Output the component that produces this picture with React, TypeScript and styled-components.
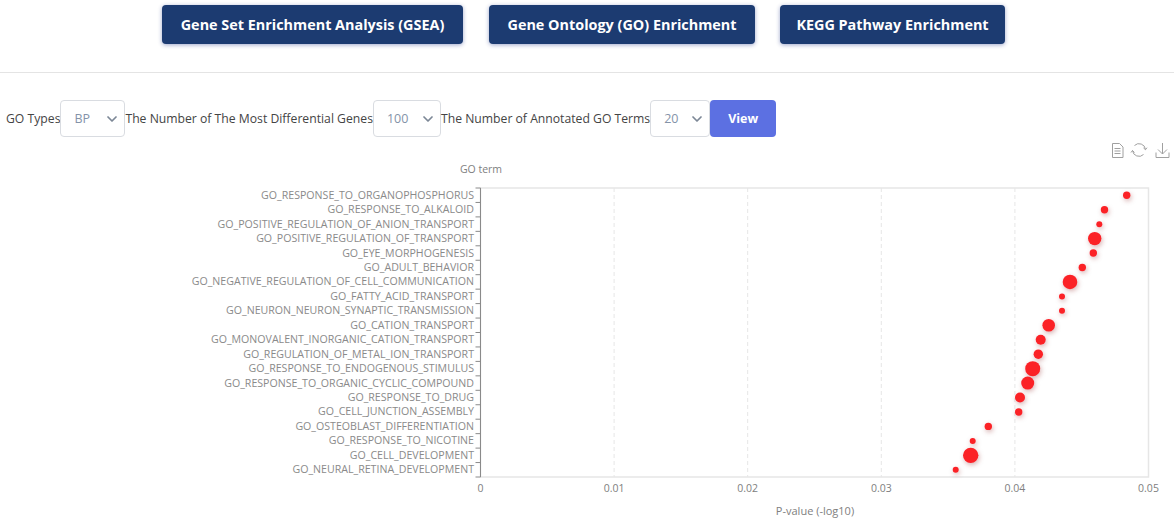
import React from "react";
import styled, { createGlobalStyle } from "styled-components";
import { FiChevronDown } from "react-icons/fi";

const GlobalStyle = createGlobalStyle`
  html, body {
    margin: 0;
    padding: 0;
    background: #fff;
    font-family: "Open Sans", "Noto Sans", "Liberation Sans", sans-serif;
  }
`;

const Page = styled.div`
  width: 1174px;
  height: 524px;
  overflow: hidden;
`;

const TabBar = styled.div`
  display: flex;
  align-items: flex-start;
  height: 67px;
  padding: 5px 0 0 162px;
  border-bottom: 1px solid #e4e4e4;
`;

const TabButton = styled.button<{ $width: number; $offset: number }>`
  width: ${(p) => p.$width}px;
  height: 39px;
  margin-left: ${(p) => p.$offset}px;
  padding: 0;
  border: none;
  border-radius: 4px;
  background: #1c3b71;
  box-shadow: 0 1px 4px rgba(40, 60, 140, 0.45);
  color: #fff;
  font-family: inherit;
  font-size: 14.4px;
  font-weight: 700;
`;

const FilterRow = styled.div`
  display: flex;
  align-items: center;
  height: 37px;
  margin-top: 27px;
  padding-left: 6px;
`;

const FilterLabel = styled.span`
  color: #444;
  font-size: 12.19px;
  white-space: nowrap;
`;

const Select = styled.div<{ $width: number }>`
  display: flex;
  align-items: center;
  justify-content: space-between;
  box-sizing: border-box;
  width: ${(p) => p.$width}px;
  height: 37px;
  padding: 0 4px 0 13px;
  border: 1px solid #d9dce1;
  border-radius: 4px;
  color: #8493a8;
  font-size: 12.5px;

  svg {
    width: 16px;
    height: 16px;
    color: #7c8796;
    stroke-width: 2.6;
  }
`;

const ViewButton = styled.button`
  width: 66px;
  height: 37px;
  padding: 0;
  border: none;
  border-radius: 4px;
  background: #5c70e2;
  color: #fff;
  font-family: inherit;
  font-size: 12.5px;
  font-weight: 700;
`;

const ChartFrame = styled.svg`
  display: block;
  width: 1174px;
  height: 387px;
  font-family: "Open Sans", "Noto Sans", "Liberation Sans", sans-serif;
`;

const terms: { name: string; x: number; r: number }[] = [
  { name: "GO_RESPONSE_TO_ORGANOPHOSPHORUS", x: 1126.7, r: 3.7 },
  { name: "GO_RESPONSE_TO_ALKALOID", x: 1104.5, r: 3.7 },
  { name: "GO_POSITIVE_REGULATION_OF_ANION_TRANSPORT", x: 1099.3, r: 3 },
  { name: "GO_POSITIVE_REGULATION_OF_TRANSPORT", x: 1094.7, r: 6.7 },
  { name: "GO_EYE_MORPHOGENESIS", x: 1093.3, r: 3.7 },
  { name: "GO_ADULT_BEHAVIOR", x: 1082.3, r: 3.7 },
  { name: "GO_NEGATIVE_REGULATION_OF_CELL_COMMUNICATION", x: 1070, r: 7.3 },
  { name: "GO_FATTY_ACID_TRANSPORT", x: 1062, r: 3 },
  { name: "GO_NEURON_NEURON_SYNAPTIC_TRANSMISSION", x: 1062, r: 3 },
  { name: "GO_CATION_TRANSPORT", x: 1048.7, r: 6.3 },
  { name: "GO_MONOVALENT_INORGANIC_CATION_TRANSPORT", x: 1040.7, r: 5 },
  { name: "GO_REGULATION_OF_METAL_ION_TRANSPORT", x: 1038.3, r: 4.7 },
  { name: "GO_RESPONSE_TO_ENDOGENOUS_STIMULUS", x: 1032.7, r: 7.5 },
  { name: "GO_RESPONSE_TO_ORGANIC_CYCLIC_COMPOUND", x: 1027.7, r: 6.5 },
  { name: "GO_RESPONSE_TO_DRUG", x: 1020, r: 5 },
  { name: "GO_CELL_JUNCTION_ASSEMBLY", x: 1018.7, r: 3.7 },
  { name: "GO_OSTEOBLAST_DIFFERENTIATION", x: 988.3, r: 3.7 },
  { name: "GO_RESPONSE_TO_NICOTINE", x: 972.7, r: 3 },
  { name: "GO_CELL_DEVELOPMENT", x: 970.7, r: 7.7 },
  { name: "GO_NEURAL_RETINA_DEVELOPMENT", x: 955.7, r: 3 },
];

// chart svg starts at y=137 of the page
const TOP = 51;
const BOTTOM = 340;
const LEFT = 480.5;
const RIGHT = 1148.5;
const BAND = (BOTTOM - TOP) / terms.length;
const xTicks = [0, 0.01, 0.02, 0.03, 0.04, 0.05];

const Chart = () => (
  <ChartFrame viewBox="0 0 1174 387">
    <defs>
      <filter id="dotShadow" x="-100%" y="-100%" width="300%" height="300%">
        <feDropShadow dx="1" dy="2" stdDeviation="2.5" floodColor="#7a0000" floodOpacity="0.3" />
      </filter>
    </defs>

    {/* toolbox */}
    <g fill="none" stroke="#a0a0a0" strokeWidth="1">
      <path d="M1112.5 6.5h7l3.5 3.5v10.5h-10.5z" />
      <path d="M1114.5 11.5h6M1114.5 14h6M1114.5 16.5h6" />
      <path d="M1134.5 8.5a6.5 6.5 0 0 1 11 4" />
      <path d="M1143.5 17.5a6.5 6.5 0 0 1 -11 -4" />
      <path d="M1143.5 11l2 1.7 1.5 -2M1134.5 15.5l-2 -2 -1.5 2" />
      <path d="M1162.5 6v11M1158 12.5l4.5 4.5 4.5 -4.5" />
      <path d="M1156 15.5v5h13v-5" />
    </g>

    <text x="481" y="36" textAnchor="middle" fontSize="10.5" fill="#808080">GO term</text>

    {/* plot frame and grid */}
    {xTicks.slice(1, -1).map((t) => {
      const x = LEFT + (t / 0.05) * (RIGHT - LEFT);
      return <line key={t} x1={x} x2={x} y1={TOP} y2={BOTTOM} stroke="#e6e6e6" strokeDasharray="4 3" />;
    })}
    <rect x={LEFT} y={TOP} width={RIGHT - LEFT} height={BOTTOM - TOP} fill="none" stroke="#e6e6e6" strokeWidth="1.5" />
    <line x1={LEFT} x2={LEFT} y1={TOP} y2={BOTTOM} stroke="#8a8a8a" />

    {/* y axis */}
    {terms.map((term, i) => {
      const y = TOP + BAND * i;
      return (
        <g key={term.name}>
          <line x1={LEFT - 5} x2={LEFT} y1={y} y2={y} stroke="#8a8a8a" />
          <text x={LEFT - 6.5} y={y + BAND / 2 + 3.5} textAnchor="end" fontSize="10.62" fill="#8a8a8a">
            {term.name}
          </text>
        </g>
      );
    })}
    <line x1={LEFT - 5} x2={LEFT} y1={BOTTOM} y2={BOTTOM} stroke="#8a8a8a" />

    {/* x axis */}
    {xTicks.map((t) => (
      <text
        key={t}
        x={LEFT + (t / 0.05) * (RIGHT - LEFT)}
        y={BOTTOM + 15}
        textAnchor="middle"
        fontSize="10.5"
        fill="#808080"
      >
        {t}
      </text>
    ))}
    <text x="815" y={BOTTOM + 38} textAnchor="middle" fontSize="11" fill="#808080">
      P-value (-log10)
    </text>

    {/* points */}
    {terms.map((term, i) => (
      <circle
        key={term.name}
        cx={term.x}
        cy={TOP + BAND * (i + 0.5)}
        r={term.r}
        fill="#fb2027"
        filter="url(#dotShadow)"
      />
    ))}
  </ChartFrame>
);

export default function App() {
  return (
    <Page>
      <GlobalStyle />
      <TabBar>
        <TabButton $width={301} $offset={0}>Gene Set Enrichment Analysis (GSEA)</TabButton>
        <TabButton $width={266} $offset={26}>Gene Ontology (GO) Enrichment</TabButton>
        <TabButton $width={225} $offset={25}>KEGG Pathway Enrichment</TabButton>
      </TabBar>
      <FilterRow>
        <FilterLabel>GO Types</FilterLabel>
        <Select $width={65}>BP<FiChevronDown /></Select>
        <FilterLabel>The Number of The Most Differential Genes</FilterLabel>
        <Select $width={68}>100<FiChevronDown /></Select>
        <FilterLabel>The Number of Annotated GO Terms</FilterLabel>
        <Select $width={60}>20<FiChevronDown /></Select>
        <ViewButton>View</ViewButton>
      </FilterRow>
      <Chart />
    </Page>
  );
}
